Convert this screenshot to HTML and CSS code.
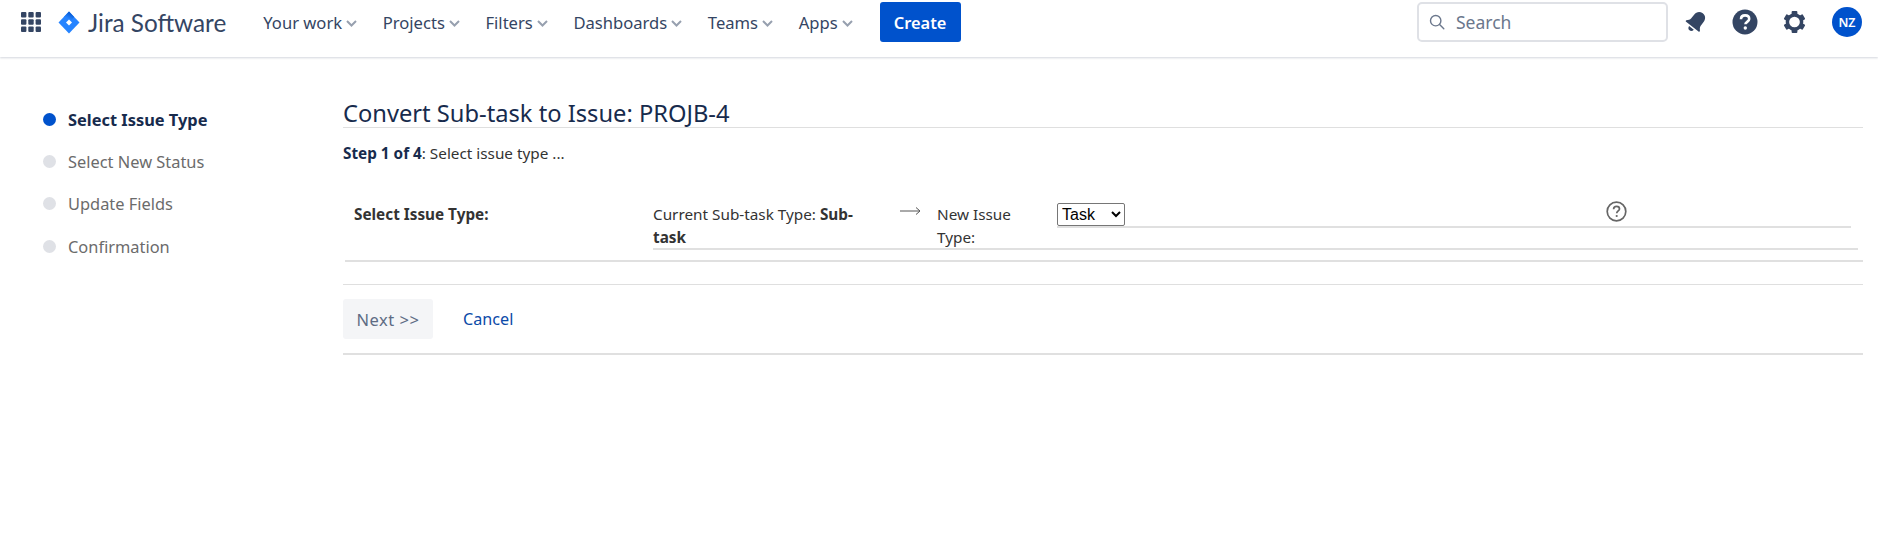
FILE: index.html
```html
<!DOCTYPE html>
<html lang="en">
<head>
<meta charset="utf-8">
<title>Convert Sub-task to Issue</title>
<link rel="stylesheet" href="styles.css">
</head>
<body>
<header class="topbar">
  <svg class="apps" width="20" height="20" viewBox="0 0 20 20" fill="#344563">
    <rect x="0" y="0" width="5.4" height="5.4" rx="1"/><rect x="7.3" y="0" width="5.4" height="5.4" rx="1"/><rect x="14.6" y="0" width="5.4" height="5.4" rx="1"/>
    <rect x="0" y="7.3" width="5.4" height="5.4" rx="1"/><rect x="7.3" y="7.3" width="5.4" height="5.4" rx="1"/><rect x="14.6" y="7.3" width="5.4" height="5.4" rx="1"/>
    <rect x="0" y="14.6" width="5.4" height="5.4" rx="1"/><rect x="7.3" y="14.6" width="5.4" height="5.4" rx="1"/><rect x="14.6" y="14.6" width="5.4" height="5.4" rx="1"/>
  </svg>
  <svg class="logo" width="22" height="23" viewBox="0 0 22 23">
    <defs><linearGradient id="lg" x1="0.6" y1="0" x2="0.3" y2="0.6"><stop offset="0" stop-color="#0052cc"/><stop offset="1" stop-color="#2684ff"/></linearGradient></defs>
    <path d="M11 0.5 L21.5 11.5 L11 22.5 L0.5 11.5 Z" fill="#2684ff"/>
    <path d="M11 0.5 L16.2 6 L11 11.5 L5.8 6 Z" fill="url(#lg)"/>
    <path d="M11 8.4 L14 11.5 L11 14.6 L8 11.5 Z" fill="#fff"/>
  </svg>
  <span class="wordmark">Jira Software</span>
  <nav class="nav">
    <a class="nav-item">Your work<svg class="chev" width="11" height="7" viewBox="0 0 11 7"><path d="M1 1 L5.5 5.5 L10 1" /></svg></a>
    <a class="nav-item">Projects<svg class="chev" width="11" height="7" viewBox="0 0 11 7"><path d="M1 1 L5.5 5.5 L10 1" /></svg></a>
    <a class="nav-item">Filters<svg class="chev" width="11" height="7" viewBox="0 0 11 7"><path d="M1 1 L5.5 5.5 L10 1" /></svg></a>
    <a class="nav-item">Dashboards<svg class="chev" width="11" height="7" viewBox="0 0 11 7"><path d="M1 1 L5.5 5.5 L10 1" /></svg></a>
    <a class="nav-item">Teams<svg class="chev" width="11" height="7" viewBox="0 0 11 7"><path d="M1 1 L5.5 5.5 L10 1" /></svg></a>
    <a class="nav-item">Apps<svg class="chev" width="11" height="7" viewBox="0 0 11 7"><path d="M1 1 L5.5 5.5 L10 1" /></svg></a>
  </nav>
  <button class="create">Create</button>
  <div class="right">
    <div class="search">
      <svg width="16" height="16" viewBox="0 0 16 16" fill="none" stroke="#6b778c" stroke-width="1.4"><circle cx="6.7" cy="6.7" r="5.2"/><path d="M10.6 10.6 L14.8 14.8" stroke-linecap="round"/></svg>
      <span>Search</span>
    </div>
    <svg class="ico-bell" width="22" height="24" viewBox="0 0 22 24" fill="#344563">
      <g transform="rotate(38 11 12)">
        <path d="M11 1 C14.8 1 17 3.8 17 7.4 V12 C17 14 18.4 15.2 19.6 16.6 C20 17.2 19.6 18 18.9 18 H3.1 C2.4 18 2 17.2 2.4 16.6 C3.6 15.2 5 14 5 12 V7.4 C5 3.8 7.2 1 11 1 Z"/>
        <path d="M8 19.4 H14 C13.8 21.4 12.6 22.6 11 22.6 C9.4 22.6 8.2 21.4 8 19.4 Z"/>
      </g>
    </svg>
    <svg class="ico-help" width="26" height="26" viewBox="0 0 26 26">
      <circle cx="13" cy="13" r="12.5" fill="#344563"/>
      <path d="M9 10.2 C9 7.8 10.8 6.4 13.1 6.4 C15.5 6.4 17.2 7.8 17.2 10 C17.2 12.6 13.4 13 13.4 15.2" fill="none" stroke="#fff" stroke-width="2.6"/>
      <circle cx="13.3" cy="19" r="1.7" fill="#fff"/>
    </svg>
    <svg class="ico-gear" width="23" height="24" viewBox="0 0 24 24">
      <circle cx="12" cy="12" r="7.4" fill="none" stroke="#344563" stroke-width="3.6"/>
      <g fill="#344563">
        <rect x="9" y="0.6" width="6" height="4.5" rx="1"/>
        <rect x="9" y="18.9" width="6" height="4.5" rx="1"/>
        <rect x="9" y="0.6" width="6" height="4.5" rx="1" transform="rotate(60 12 12)"/>
        <rect x="9" y="0.6" width="6" height="4.5" rx="1" transform="rotate(120 12 12)"/>
        <rect x="9" y="0.6" width="6" height="4.5" rx="1" transform="rotate(240 12 12)"/>
        <rect x="9" y="0.6" width="6" height="4.5" rx="1" transform="rotate(300 12 12)"/>
      </g>
    </svg>
    <span class="avatar">NZ</span>
  </div>
</header>

<div class="page">
  <aside class="steps">
    <div class="step current"><i class="dot"></i>Select Issue Type</div>
    <div class="step"><i class="dot"></i>Select New Status</div>
    <div class="step"><i class="dot"></i>Update Fields</div>
    <div class="step"><i class="dot"></i>Confirmation</div>
  </aside>
  <main class="content">
    <h1 class="title">Convert Sub-task to Issue: PROJB-4</h1>
    <p class="stepline"><b>Step 1 of 4</b>: Select issue type ...</p>
    <div class="table">
      <div class="row">
        <div class="label">Select Issue Type:</div>
        <div class="cells">
          <div class="type-now">Current Sub-task Type: <b>Sub-task</b></div>
          <div class="arrow">
            <svg width="21" height="10" viewBox="0 0 21 10" fill="none" stroke="#555" stroke-width="1"><path d="M0 5 H20 M16 1.5 L20 5 L16 8.5"/></svg>
          </div>
          <div class="newtype">New Issue Type:</div>
          <div class="picker">
            <select class="select"><option>Task</option></select>
            <svg class="hint" width="21" height="21" viewBox="0 0 21 21">
              <circle cx="10.5" cy="10.5" r="9.3" fill="none" stroke="#666" stroke-width="1.7"/>
              <path d="M7.6 8.2 C7.6 6.4 9 5.4 10.6 5.4 C12.3 5.4 13.5 6.4 13.5 7.9 C13.5 9.8 10.7 10 10.7 12.2" fill="none" stroke="#666" stroke-width="1.7"/>
              <circle cx="10.7" cy="15" r="1.1" fill="#666"/>
            </svg>
          </div>
        </div>
      </div>
    </div>
    <div class="actions">
      <button class="next" disabled>Next &gt;&gt;</button>
      <a class="cancel">Cancel</a>
    </div>
  </main>
</div>
</body>
</html>
```

FILE: styles.css
```css
* { box-sizing: border-box; }
html, body { margin: 0; padding: 0; }
body {
  background: #fff;
  color: #172b4d;
  font-family: "Noto Sans", "Open Sans", sans-serif;
  font-size: 15.3px;
  height: 553px;
  overflow: hidden;
}
.topbar {
  height: 57px;
  display: flex;
  align-items: center;
  padding: 0 16px 13px 21px;
  box-shadow: 0 1px 2px rgba(9, 30, 66, 0.18);
}
.apps { flex: none; }
.logo { flex: none; margin-left: 17px; }
.wordmark {
  font-family: "Lato", sans-serif;
  font-size: 24.3px;
  color: #344563;
  margin-left: 8px;
}
.nav { display: flex; margin-left: 37px; gap: 25.6px; margin-top: 1px; }
.nav-item {
  display: flex;
  align-items: center;
  gap: 4px;
  font-size: 16.6px;
  color: #344563;
}
.chev { fill: none; stroke: #97a0af; stroke-width: 2; margin-top: 2px; }
.create {
  margin-left: 27px;
  width: 81px;
  height: 40px;
  border: 0;
  border-radius: 3px;
  background: #0052cc;
  color: #fff;
  font: 600 16.4px "Noto Sans", sans-serif;
}
.right { margin-left: auto; display: flex; align-items: center; }
.search {
  width: 251px;
  height: 40px;
  border: 2px solid #dfe1e6;
  border-radius: 5px;
  display: flex;
  align-items: center;
  gap: 11px;
  padding-left: 10px;
  color: #6b778c;
  font-size: 17.5px;
}
.ico-bell { margin-left: 17px; }
.ico-help { margin-left: 25px; }
.ico-gear { margin-left: 25px; }
.avatar {
  width: 30px;
  height: 30px;
  margin-left: 26px;
  border-radius: 50%;
  background: #0052cc;
  color: #fff;
  font-size: 12.5px;
  font-weight: 600;
  display: flex;
  align-items: center;
  justify-content: center;
}
.page { display: flex; padding: 42px 15px 0 0; }
.steps { width: 343px; flex: none; padding-left: 43px; margin-top: -1px; }
.step {
  display: flex;
  align-items: center;
  height: 42.3px;
  font-size: 16.4px;
  color: #6b6b6b;
}
.step.current { color: #172b4d; font-weight: 700; }
.dot {
  width: 13px;
  height: 13px;
  margin-right: 12px;
  border-radius: 50%;
  background: #dfe1e6;
  flex: none;
}
.current .dot { background: #0052cc; }
.content { flex: 1; min-width: 0; }
.title {
  margin: 0;
  height: 29px;
  border-bottom: 1px solid #dfdfdf;
  font-size: 23.7px;
  font-weight: 400;
  line-height: 29px;
  color: #172b4d;
}
.stepline { margin: 15px 0 0; font-size: 15.3px; line-height: 20px; color: #333; }
.stepline b { color: #172b4d; }
.table {
  margin: 0 0 0 2px;
  padding-top: 35px;
  height: 99px;
  border-bottom: 2px solid #e0e0e0;
}
.row { display: flex; color: #333; }
.label { width: 308px; flex: none; padding: 5px 0 0 9px; font-weight: 700; line-height: 22px; }
.cells {
  flex: 1;
  display: flex;
  height: 52px;
  padding-top: 5px;
  margin-right: 5px;
  border-bottom: 2px solid #e0e0e0;
  line-height: 23px;
}
.type-now { width: 215px; margin-right: 32px; flex: none; }
.arrow { width: 37px; flex: none; }
.arrow svg { display: block; margin-top: 3px; }
.newtype { width: 90px; margin-right: 30px; flex: none; }
.picker {
  flex: 1;
  height: 26px;
  padding-top: 1px;
  margin-top: -1px;
  margin-right: 7px;
  position: relative;
  border-bottom: 2px solid #e0e0e0;
}
.select {
  font: 16px "Liberation Sans", Arial, sans-serif;
  height: 23px;
  width: 68px;
  background: #fff;
  color: #000;
  display: block;
  border: 1px solid #767676;
  border-radius: 2px;
}
.hint { position: absolute; left: 549px; top: -1px; }
.actions {
  margin-top: 22px;
  height: 71px;
  border-top: 1px solid #dfdfdf;
  border-bottom: 2px solid #e0e0e0;
  padding-top: 14px;
  display: flex;
  align-items: flex-start;
}
.next {
  width: 90px;
  height: 40px;
  border: 0;
  border-radius: 3px;
  background: #f4f5f7;
  color: #5e6c84;
  font: 16.5px "Noto Sans", sans-serif;
  letter-spacing: 0.5px;
}
.cancel { margin-left: 30px; line-height: 40px; font-size: 16.2px; color: #0b4aa8; }
```
